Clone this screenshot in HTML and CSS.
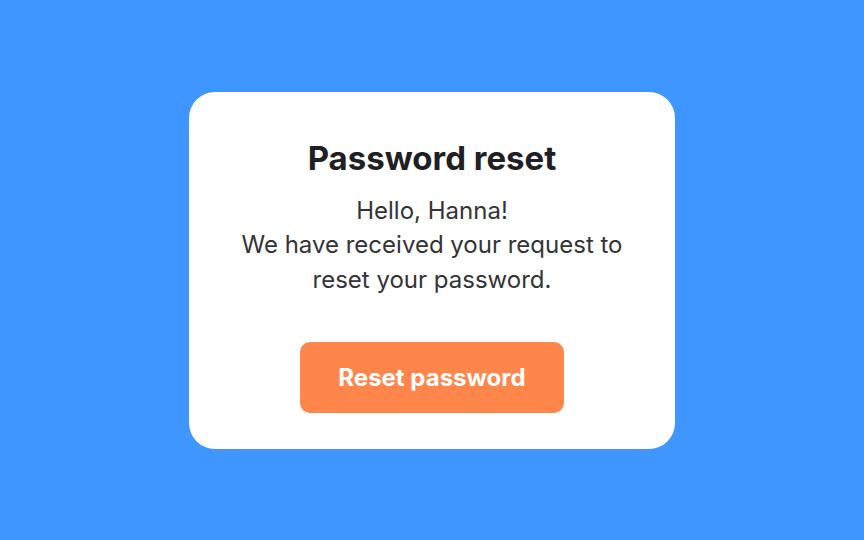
FILE: index.html
```html
<!DOCTYPE html>
<html lang="en">
<head>
  <meta charset="UTF-8" />
  <title>Password reset</title>
  <link rel="stylesheet" href="styles.css">
</head>
<body>
  <div class="card">
    <h1>Password reset</h1>
    <p>Hello, Hanna!<br />We have received your request to reset your password.</p>
    <button class="btn" type="button">Reset password</button>
  </div>
</body>
</html>
```

FILE: styles.css
```css
body {
  margin: 0;
  height: 540px;
  background-color: #3f96fe;
  font-family: Inter, "Noto Sans", sans-serif;
  display: flex;
  align-items: center;
  justify-content: center;
}

.card {
  width: 486px;
  height: 357px;
  box-sizing: border-box;
  background-color: #fff;
  border-radius: 26px;
  padding: 46px 30px 36px;
  display: flex;
  flex-direction: column;
  align-items: center;
  text-align: center;
}

.card h1 {
  margin: 0;
  font-size: 33px;
  line-height: 40px;
  font-weight: 700;
  color: #1f1f24;
}

.card p {
  margin: 16px 0 0;
  font-size: 24px;
  line-height: 34.5px;
  color: #333338;
}

.btn {
  margin-top: auto;
  width: 264px;
  height: 71px;
  border: none;
  border-radius: 10px;
  background-color: #ff864b;
  color: #fff;
  font-family: inherit;
  font-size: 24px;
  font-weight: 700;
}
```
